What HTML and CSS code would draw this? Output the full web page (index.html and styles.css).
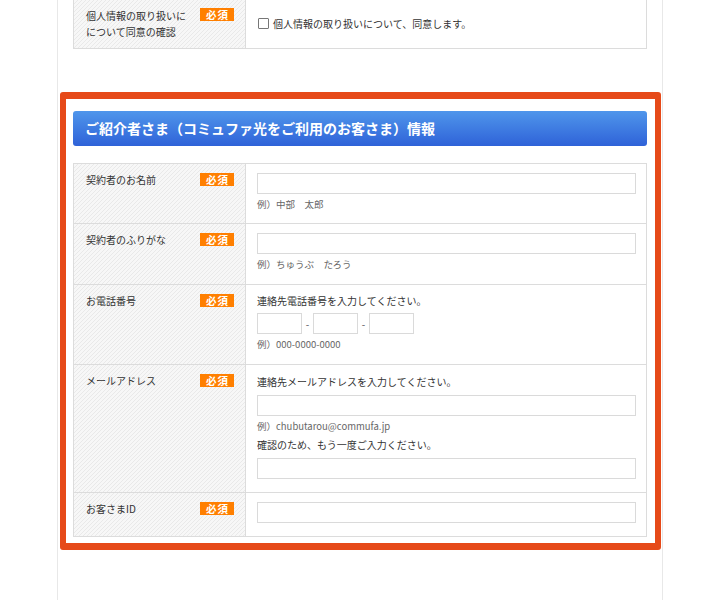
FILE: index.html
```html
<!doctype html>
<html lang="ja">
<head>
<meta charset="UTF-8">
<title>ご紹介者さま情報</title>
<link rel="stylesheet" href="styles.css">
</head>
<body>
<div class="wrap">
	<!-- 同意 -->
	<div class="form form-top">
		<div class="row">
			<div class="th">
				<span class="label">個人情報の取り扱いに<br>について同意の確認</span>
				<span class="req">必須</span>
			</div>
			<div class="td td-check">
				<span class="check"></span>
				<span>個人情報の取り扱いについて、同意します。</span>
			</div>
		</div>
	</div>

	<!-- ご紹介者さま -->
	<div class="pickup">
		<h2 class="ttl">ご紹介者さま（コミュファ光をご利用のお客さま）情報</h2>
		<div class="form">
			<div class="row">
				<div class="th"><span class="label">契約者のお名前</span><span class="req">必須</span></div>
				<div class="td td-first">
					<input class="txt" type="text">
					<p class="note">例）中部　太郎</p>
				</div>
			</div>
			<div class="row">
				<div class="th"><span class="label">契約者のふりがな</span><span class="req">必須</span></div>
				<div class="td">
					<input class="txt" type="text">
					<p class="note">例）ちゅうぶ　たろう</p>
				</div>
			</div>
			<div class="row">
				<div class="th"><span class="label">お電話番号</span><span class="req">必須</span></div>
				<div class="td">
					<p class="lead">連絡先電話番号を入力してください。</p>
					<div class="tel">
						<input class="txt short" type="text"><span class="sep">-</span><input class="txt short" type="text"><span class="sep">-</span><input class="txt short" type="text">
					</div>
					<p class="note">例）000-0000-0000</p>
				</div>
			</div>
			<div class="row">
				<div class="th"><span class="label">メールアドレス</span><span class="req">必須</span></div>
				<div class="td">
					<p class="lead lead-mail">連絡先メールアドレスを入力してください。</p>
					<input class="txt" type="text">
					<p class="note">例）chubutarou@commufa.jp</p>
					<p class="lead lead-again">確認のため、もう一度ご入力ください。</p>
					<input class="txt" type="text">
				</div>
			</div>
			<div class="row">
				<div class="th"><span class="label">お客さまID</span><span class="req">必須</span></div>
				<div class="td">
					<input class="txt" type="text">
				</div>
			</div>
		</div>
	</div>
</div>
</body>
</html>
```

FILE: styles.css
```css
*{ margin:0; padding:0; box-sizing:border-box;}
body{
	font-family:"Noto Sans CJK JP","Noto Sans",sans-serif;
	font-size:10px;
	color:#333;
	background-color:#fff;
}
.wrap{
	width:606px;
	min-height:600px;
	margin-left:57px;
	padding:0 15px 40px;
	border-left:1px solid #e8e8e8;
	border-right:1px solid #e8e8e8;
}

/* フォーム表 */
.form{
	border:1px solid #dcdcdc;
	background-color:#fff;
}
.form-top{
	border-top:none;
}
.row{
	display:grid;
	grid-template-columns:172px 1fr;
	border-top:1px solid #dcdcdc;
}
.row:first-child{
	border-top:none;
}
.th{
	display:flex;
	justify-content:space-between;
	align-items:flex-start;
	padding:9px 11px 0 12px;
	border-right:1px solid #dcdcdc;
	background-color:#f4f4f4;
	background-image:linear-gradient(-45deg,#e9e9e9 0,#e9e9e9 12.5%,#f7f7f7 12.5%,#f7f7f7 50%,#e9e9e9 50%,#e9e9e9 62.5%,#f7f7f7 62.5%,#f7f7f7 100%);
	background-size:4px 4px;
}
.label{
	line-height:13px;
}
.req{
	width:34px;
	height:13px;
	line-height:13px;
	background-color:#ff7f00;
	color:#fff;
	font-weight:bold;
	font-size:10.5px;
	letter-spacing:1px;
	padding-left:1px;
	text-align:center;
}
.td{
	padding:9px 10px 13px 11px;
}
.td-first{
	padding-bottom:12px;
}

/* 同意欄 */
.form-top .th{
	padding-top:8px;
	padding-bottom:8px;
}
.form-top .label{
	line-height:16px;
}
.td-check{
	display:flex;
	align-items:center;
	padding-top:0;
	padding-bottom:1px;
	padding-left:12px;
}
.check{
	width:11px;
	height:11px;
	margin-right:4px;
	border:1px solid #777;
	border-radius:1px;
	background-color:#fff;
}

/* 赤枠 */
.pickup{
	margin:43px -14px 0 -13px;
	padding:12px 8px 6px 7px;
	border:solid #e64a19;
	border-width:7px 6px;
	border-radius:3px;
}
.ttl{
	height:35px;
	line-height:35px;
	margin-bottom:17px;
	padding-left:12px;
	border-radius:3px;
	background:linear-gradient(#4f96eb,#2f62d8);
	color:#fff;
	font-size:14px;
	font-weight:bold;
}

/* 入力 */
.txt{
	display:block;
	width:100%;
	height:21px;
	border:1px solid #dadada;
	background-color:#fff;
	font-size:10px;
	outline:none;
}
.lead{
	line-height:14px;
	margin-bottom:5px;
}
.lead-mail{
	margin-top:1px;
	margin-bottom:6px;
}
.lead-again{
	margin-top:5px;
	margin-bottom:6px;
}
.note{
	margin-top:3px;
	line-height:14px;
	font-size:9.5px;
	color:#666;
}
.tel{
	display:flex;
	align-items:center;
}
.txt.short{
	width:45px;
}
.sep{
	width:11px;
	text-align:center;
	color:#555;
}
```
